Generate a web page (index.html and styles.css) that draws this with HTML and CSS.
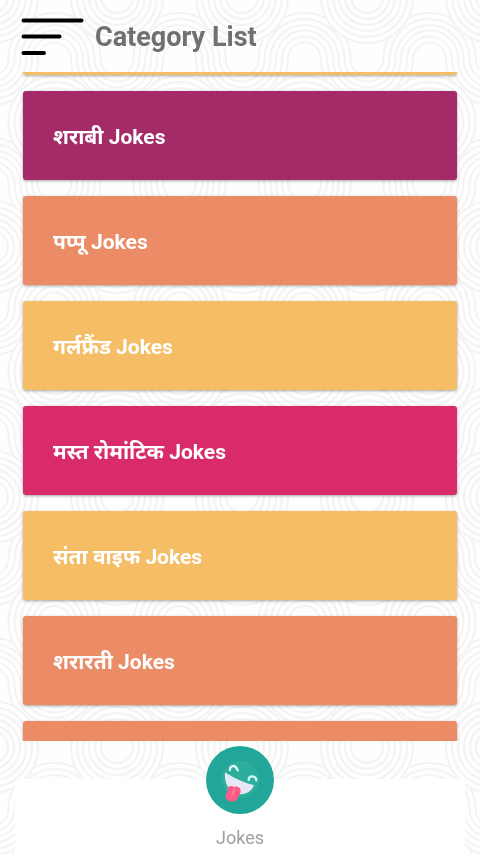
FILE: index.html
```html
<!DOCTYPE html>
<html lang="hi">
<head>
  <meta charset="UTF-8" />
  <meta name="viewport" content="width=device-width, initial-scale=1.0" />
  <title>Category List</title>
  <link rel="stylesheet" href="styles.css">
</head>
<body>
  <svg class="page-bg" aria-hidden="true">
    <defs>
      <pattern id="waves" width="125" height="250" patternUnits="userSpaceOnUse" patternTransform="translate(-8 -3)">
        <g class="bg-line">
          <!-- upper wave -->
          <path d="M-46 62a46 46 0 0 0 92 0a16.500 16.500 0 0 1 33 0a46 46 0 0 0 92 0" />
          <path d="M-40 62a40 40 0 0 0 80 0a22.500 22.500 0 0 1 45 0a40 40 0 0 0 80 0" />
          <path d="M-34 62a34 34 0 0 0 68 0a28.500 28.500 0 0 1 57 0a34 34 0 0 0 68 0" />
          <path d="M-28.500 62a28.500 28.500 0 0 0 57 0a34 34 0 0 1 68 0a28.500 28.500 0 0 0 57 0" />
          <path d="M-22.500 62a22.500 22.500 0 0 0 45 0a40 40 0 0 1 80 0a22.500 22.500 0 0 0 45 0" />
          <path d="M-16.500 62a16.500 16.500 0 0 0 33 0a46 46 0 0 1 92 0a16.500 16.500 0 0 0 33 0" />
          <!-- lower wave -->
          <path d="M-46 187a46 46 0 0 1 92 0a16.500 16.500 0 0 0 33 0a46 46 0 0 1 92 0" />
          <path d="M-40 187a40 40 0 0 1 80 0a22.500 22.500 0 0 0 45 0a40 40 0 0 1 80 0" />
          <path d="M-34 187a34 34 0 0 1 68 0a28.500 28.500 0 0 0 57 0a34 34 0 0 1 68 0" />
          <path d="M-28.500 187a28.500 28.500 0 0 1 57 0a34 34 0 0 0 68 0a28.500 28.500 0 0 1 57 0" />
          <path d="M-22.500 187a22.500 22.500 0 0 1 45 0a40 40 0 0 0 80 0a22.500 22.500 0 0 1 45 0" />
          <path d="M-16.500 187a16.500 16.500 0 0 1 33 0a46 46 0 0 0 92 0a16.500 16.500 0 0 1 33 0" />
          <!-- rings -->
          <g id="rings">
            <circle class="bg-disc" r="46" />
            <circle r="40" />
            <circle r="34" />
            <circle r="28" />
            <circle r="22" />
            <circle r="16" />
          </g>
          <use href="#rings" x="125" />
          <use href="#rings" y="250" />
          <use href="#rings" x="125" y="250" />
          <use href="#rings" x="62.500" y="125" />
        </g>
      </pattern>
    </defs>
    <rect width="100%" height="100%" fill="url(#waves)" />
  </svg>

  <header class="top-bar">
    <button type="button" class="menu-btn" aria-label="Menu">
      <svg width="64" height="40" viewBox="0 0 64 40" aria-hidden="true">
        <path d="M3.500 3.500H61.500M3.500 19.500H39.500M3.500 36H24" />
      </svg>
    </button>
    <h1>Category List</h1>
  </header>

  <main class="category-list">
    <div class="card card-end yellow"></div>
    <a href="#" class="card purple">शराबी Jokes</a>
    <a href="#" class="card orange">पप्पू Jokes</a>
    <a href="#" class="card yellow">गर्लफ्रैंड Jokes</a>
    <a href="#" class="card pink">मस्त रोमांटिक Jokes</a>
    <a href="#" class="card yellow">संता वाइफ Jokes</a>
    <a href="#" class="card orange">शरारती Jokes</a>
    <div class="card orange"></div>
  </main>

  <nav class="bottom-nav">
    <a href="#" class="nav-item">
      <svg width="68" height="68" viewBox="0 0 204 204" aria-hidden="true">
        <circle cx="102" cy="102" r="102" fill="#22a699" />
        <circle cx="103" cy="100" r="56" fill="#2dad9b" />
        <path d="M57 79Q100 107 144 118C136 140 112 150 89 142C66 134 54 108 57 79Z" fill="#e6e8f6" />
        <path d="M72 72C70 58 88 54 95 73" fill="none" stroke="#d8f8f4" stroke-width="7" stroke-linecap="round" />
        <path d="M128 102C128 87 149 88 151 103" fill="none" stroke="#d8f8f4" stroke-width="7" stroke-linecap="round" />
        <path d="M65 128C68 117 79 119 84 123C92 119 103 124 104 132C105 141 99 146 96 154C91 167 78 170 68 165C57 159 57 148 62 141C65 137 64 132 65 128Z" fill="#fb5b86" />
        <path d="M84 127C86 137 82 142 77 149" fill="none" stroke="#fd7698" stroke-width="7" stroke-linecap="round" />
      </svg>
      <span>Jokes</span>
    </a>
  </nav>
</body>
</html>
```
FILE: styles.css
```css
* {
  box-sizing: border-box;
}

html, body {
  margin: 0;
  padding: 0;
  height: 100%;
  font-family: Roboto, "Noto Sans", "Noto Sans Devanagari", sans-serif;
}

html {
  background-color: #fefefe;
}

body {
  display: flex;
  flex-direction: column;
  overflow: hidden;
}

a {
  text-decoration: none;
}

/* wavy line pattern behind everything */
.page-bg {
  position: fixed;
  top: 0;
  left: 0;
  width: 100%;
  height: 100%;
  z-index: -1;
}

.bg-line {
  fill: none;
  stroke: #f3f3f3;
  stroke-width: 2;
}

.bg-disc {
  fill: #fefefe;
}

.top-bar {
  display: flex;
  align-items: center;
  gap: 11px;
  height: 72px;
  padding: 2px 20px 0;
  flex-shrink: 0;
}

.menu-btn {
  display: flex;
  padding: 0;
  border: none;
  background: none;
  cursor: pointer;
}

.menu-btn path {
  fill: none;
  stroke: #000;
  stroke-width: 4;
  stroke-linecap: round;
}

h1 {
  margin: 0;
  font-size: 27px;
  font-weight: 700;
  color: #707070;
}

.category-list {
  flex: 1;
  min-height: 0;
  overflow: hidden;
  display: flex;
  flex-direction: column;
  gap: 16px;
  padding: 0 23px;
}

.card {
  display: flex;
  align-items: center;
  flex-shrink: 0;
  height: 89px;
  padding: 0 30px;
  border-radius: 3px;
  font-size: 21px;
  font-weight: 700;
  color: #fff;
  box-shadow: 0 1px 3px rgba(0, 0, 0, 0.35);
}

/* last strip of the card scrolled under the header */
.card-end {
  height: 3px;
  border-radius: 0 0 3px 3px;
}

.purple {
  background-color: #a42a68;
}

.orange {
  background-color: #ec8c67;
}

.yellow {
  background-color: #f5bd65;
}

.pink {
  background-color: #d92b6a;
}

.bottom-nav {
  display: flex;
  justify-content: center;
  height: 75px;
  margin: 38px 15px 0;
  border-radius: 4px 4px 0 0;
  background-color: #fff;
  flex-shrink: 0;
}

.nav-item {
  display: flex;
  flex-direction: column;
  align-items: center;
  gap: 12px;
  margin-top: -33px;
  font-size: 18px;
  line-height: 24px;
  color: #a0a0a0;
}
```
